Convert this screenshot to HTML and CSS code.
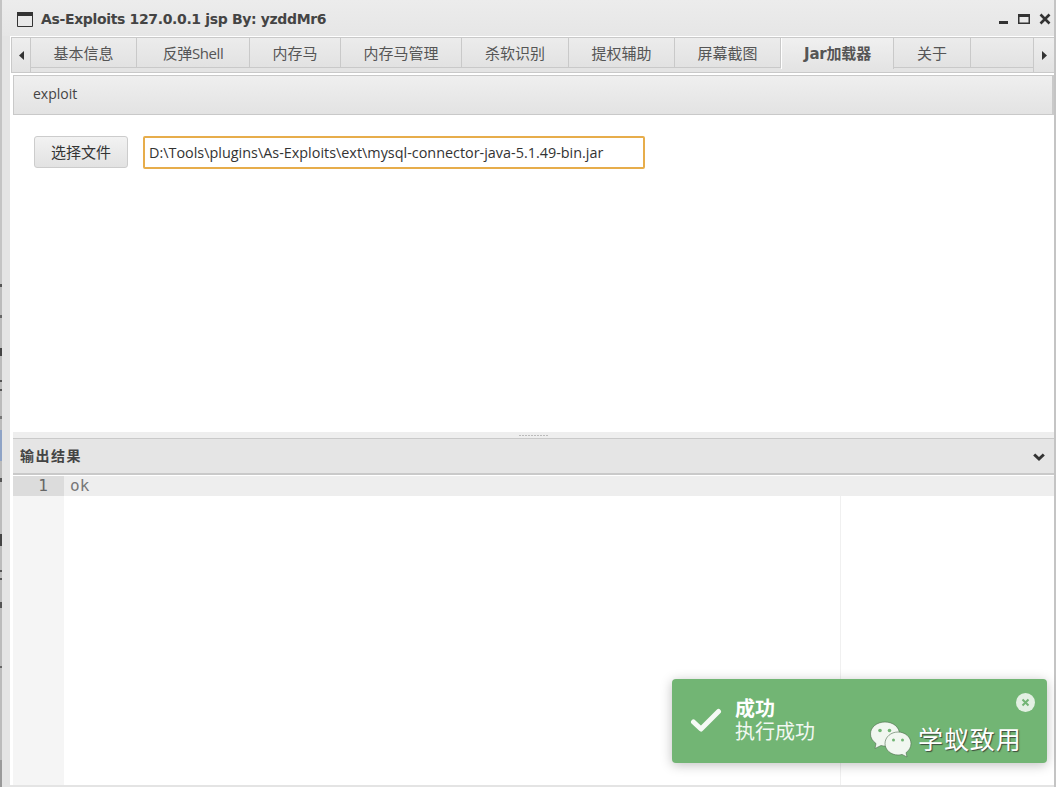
FILE: index.html
```html
<!DOCTYPE html>
<html lang="zh">
<head>
<meta charset="utf-8">
<title>As-Exploits</title>
<link rel="stylesheet" href="styles.css">
</head>
<body>
<div class="backdrop"></div>
<div class="window">
  <header class="titlebar">
    <svg class="win-icon" width="16" height="15" viewBox="0 0 16 15"><path d="M.5.5h15v14H.5z" fill="none" stroke="#333"/><path d="M0 0h16v4H0z" fill="#333"/></svg>
    <span class="title">As-Exploits 127.0.0.1 jsp By: yzddMr6</span>
    <div class="win-controls">
      <svg width="9" height="4" viewBox="0 0 9 4"><path d="M0 0h9v3H0z" fill="#333"/></svg>
      <svg width="12" height="10" viewBox="0 0 12 10"><path d="M.75 1h10.500v8.250H.75z" fill="none" stroke="#333" stroke-width="1.500"/><path d="M0 0h12v3H0z" fill="#333"/></svg>
      <svg width="12" height="12" viewBox="0 0 12 12"><path d="M1.500 1.500l9 9M10.500 1.500l-9 9" stroke="#333" stroke-width="2.600"/></svg>
    </div>
  </header>
  <div class="frame">
    <nav class="tabbar">
      <div class="scroll-btn"><svg width="5" height="9" viewBox="0 0 5 9"><path d="M5 0v9L0 4.500z" fill="#333"/></svg></div>
      <div class="tabs">
        <div class="tab t1">基本信息</div>
        <div class="tab t2">反弹Shell</div>
        <div class="tab t3">内存马</div>
        <div class="tab t4">内存马管理</div>
        <div class="tab t5">杀软识别</div>
        <div class="tab t6">提权辅助</div>
        <div class="tab t7">屏幕截图</div>
        <div class="tab t8 active">Jar加载器</div>
        <div class="tab t9">关于</div>
        <div class="tab-rest"></div>
      </div>
      <div class="scroll-btn right"><svg width="5" height="9" viewBox="0 0 5 9"><path d="M0 0v9l5-4.500z" fill="#333"/></svg></div>
    </nav>
    <section class="upper">
      <div class="panel-head">exploit</div>
      <div class="form-row">
        <button class="btn" type="button">选择文件</button>
        <div class="path-input">D:\Tools\plugins\As-Exploits\ext\mysql-connector-java-5.1.49-bin.jar</div>
      </div>
    </section>
    <div class="splitter"><span class="grip"></span></div>
    <section class="lower">
      <div class="output-head">
        <span>输出结果</span>
        <svg class="chevron" width="12" height="9" viewBox="0 0 12 9"><path d="M1.200 1.500L6 6l4.800-4.500" fill="none" stroke="#333" stroke-width="3"/></svg>
      </div>
      <div class="editor">
        <div class="gutter"><div class="line-no">1</div></div>
        <div class="code">
          <div class="code-line">ok</div>
          <div class="margin-line"></div>
        </div>
      </div>
    </section>
  </div>
</div>
<aside class="toast">
  <svg class="toast-check" width="32" height="26" viewBox="0 0 32 26"><path d="M3.500 15l7.500 7L28.500 4.500" fill="none" stroke="#fff" stroke-width="5" stroke-linecap="round" stroke-linejoin="round" opacity=".93"/></svg>
  <div class="toast-text">
    <div class="toast-title">成功</div>
    <div class="toast-msg">执行成功</div>
  </div>
  <span class="toast-close"><svg width="9" height="9" viewBox="0 0 9 9"><path d="M1.500 1.500l6 6M7.500 1.500l-6 6" stroke="#72b574" stroke-width="2"/></svg></span>
  <div class="watermark">
    <svg width="42" height="38" viewBox="0 0 42 38">
      <path d="M15 1C7 1 .5 6 .5 13c0 4 2.200 7 5.500 9.500L5 27.500l6-3c1.500.4 3 .6 4.500.6C24 25 29.500 19 29.500 13 29.500 6 23 1 15 1z" fill="#f1f7f0" stroke="#4d6b4e" stroke-width=".6"/>
      <path d="M28 11c-7 0-13 5-13 11.500S21 34 28 34c1.300 0 2.700-.2 4-.6l5 2.600-1-4.300c3-2.200 5-5.200 5-9.200C41 16 35 11 28 11z" fill="#f1f7f0" stroke="#4d6b4e" stroke-width=".6"/>
      <circle cx="10" cy="9.500" r="1.800" fill="#72b574"/><circle cx="19.500" cy="9.500" r="1.800" fill="#72b574"/>
      <circle cx="23.500" cy="19" r="1.500" fill="#72b574"/><circle cx="32.500" cy="19" r="1.500" fill="#72b574"/>
    </svg>
    <span class="wm-text">学蚁致用</span>
  </div>
</aside>
</body>
</html>
```
FILE: styles.css
```css
* { box-sizing: border-box; }
html, body { margin: 0; height: 100%; }
body {
  position: relative;
  width: 1056px;
  height: 787px;
  overflow: hidden;
  background: #fff;
  display: flex;
  font-family: "Open Sans", "Noto Sans CJK SC", sans-serif;
  color: #444;
}
.backdrop {
  width: 2px;
  flex: none;
  background: linear-gradient(#c4c4c4 0 284px, #555 284px 287px, #bbb 287px 315px, #666 315px 318px, #bbb 318px 348px,
    #444 348px 356px, #bbb 356px 380px, #555 380px 382px, #bbb 382px 389px, #555 389px 391px, #bbb 391px 416px,
    #777 416px 419px, #bbb 419px 430px, #8ea3c6 430px 461px, #bbb 461px 478px, #555 478px 482px, #bbb 482px 534px,
    #444 534px 546px, #bbb 546px 570px, #555 570px 572px, #bbb 572px 578px, #555 578px 580px, #bbb 580px 602px,
    #555 602px 608px, #bbb 608px 666px, #666 666px 668px, #bbb 668px 760px, #999 760px);
}
.window {
  width: 1054px;
  height: 787px;
  flex: none;
  display: flex;
  flex-direction: column;
  background: #e4e4e4;
  border-right: 2px solid #c4c4c4;
}
.titlebar {
  height: 36px;
  flex: none;
  display: flex;
  align-items: center;
  padding: 2px 3px 0 15px;
  background: linear-gradient(#ececec, #e6e6e6);
}
.win-icon { flex: none; }
.title {
  margin-left: 8px;
  font: bold 14px "DejaVu Sans", "Noto Sans CJK SC", sans-serif;
  letter-spacing: -0.35px;
  color: #444;
  white-space: nowrap;
}
.win-controls {
  margin-left: auto;
  display: flex;
  align-items: center;
  gap: 9px;
}
.win-controls svg:first-child { margin: 8px 1px 0 0; }
.frame {
  flex: 1;
  min-height: 0;
  margin: 0 0 2px 8px;
  border-left: 1px solid #fff;
  border-top: 1px solid #fff;
  display: flex;
  flex-direction: column;
  background: #fff;
}
.tabbar {
  height: 36px;
  flex: none;
  display: flex;
  background: #fff;
  border-left: 1px solid #c9c9c9;
  border-top: 1px solid #c9c9c9;
}
.scroll-btn {
  width: 19px;
  flex: none;
  display: flex;
  align-items: center;
  justify-content: center;
  background: linear-gradient(#eee, #e2e2e2);
  border-right: 1px solid #c9c9c9;
  border-bottom: 1px solid #c9c9c9;
}
.scroll-btn.right {
  width: 21px;
  border-right: 0;
  border-left: 1px solid #c9c9c9;
}
.tabs {
  flex: 1;
  min-width: 0;
  display: flex;
  align-items: flex-start;
  height: 35px;
  background: linear-gradient(#e4e4e4, #e4e4e4) bottom / 100% 4px no-repeat;
  border-bottom: 1px solid #c9c9c9;
}
.tab {
  height: 30px;
  flex: none;
  display: flex;
  align-items: center;
  justify-content: center;
  padding-bottom: 1px;
  font-size: 15px;
  color: #555;
  background: linear-gradient(#ececec, #e2e2e2);
  border-right: 1px solid #c9c9c9;
  border-bottom: 1px solid #c9c9c9;
  white-space: nowrap;
}
.t1 { width: 106px; }
.t2 { width: 113px; letter-spacing: -0.4px; }
.t3 { width: 91px; }
.t4 { width: 121px; }
.t5 { width: 107px; }
.t6 { width: 106px; }
.t7 { width: 106px; }
.t8 { width: 113px; }
.t9 { width: 77px; }
.tab.active {
  height: 31px;
  padding-bottom: 3px;
  font-family: "DejaVu Sans", "Noto Sans CJK SC", sans-serif;
  font-weight: bold;
  letter-spacing: -0.2px;
  background: linear-gradient(#f0f0f0, #e4e4e4);
  border-left: 1px solid #fff;
  border-bottom: 0;
}
.tab-rest {
  flex: 1;
  height: 30px;
  background: linear-gradient(#ececec, #e2e2e2);
  border-bottom: 1px solid #c9c9c9;
}
.upper {
  height: 359px;
  flex: none;
  padding: 2px 0 0 2px;
  display: flex;
  flex-direction: column;
}
.panel-head {
  height: 40px;
  flex: none;
  display: flex;
  align-items: center;
  padding: 0 0 3px 19px;
  font-size: 14px;
  color: #444;
  background: linear-gradient(#efefef, #e3e3e3);
  border: 1px solid #c9c9c9;
  border-right-width: 2px;
}
.form-row {
  display: flex;
  align-items: flex-start;
  padding: 21px 0 0 21px;
  gap: 15px;
}
.btn {
  width: 94px;
  height: 32px;
  padding: 0 0 2px;
  font: 15px "Noto Sans CJK SC", sans-serif;
  color: #333;
  background: linear-gradient(#f2f2f2, #e2e2e2);
  border: 1px solid #ccc;
  border-radius: 3px;
}
.path-input {
  width: 502px;
  height: 33px;
  display: flex;
  align-items: center;
  padding: 0 0 1px 4px;
  font-size: 14.400px;
  color: #333;
  border: 2px solid #e7ad4b;
  border-radius: 2px;
  white-space: nowrap;
}
.splitter {
  height: 6px;
  flex: none;
  margin-left: 2px;
  display: flex;
  align-items: center;
  justify-content: center;
  background: #eee;
}
.grip {
  width: 30px;
  height: 1px;
  background: repeating-linear-gradient(90deg, #bbb 0 2px, transparent 2px 3px);
}
.lower {
  flex: 1;
  min-height: 0;
  margin-left: 2px;
  display: flex;
  flex-direction: column;
}
.output-head {
  height: 37px;
  flex: none;
  display: flex;
  align-items: center;
  justify-content: space-between;
  padding: 0 9px 2px 7px;
  font: bold 14px "Noto Sans CJK SC", sans-serif;
  letter-spacing: 1.500px;
  color: #444;
  background: #e5e5e5;
  border-top: 1px solid #c9c9c9;
  border-bottom: 2px solid #c9c9c9;
}
.chevron { margin-top: 5px; }
.editor {
  flex: 1;
  min-height: 0;
  display: flex;
  margin-top: 1px;
}
.gutter {
  width: 51px;
  flex: none;
  background: #f5f5f5;
}
.line-no {
  height: 20px;
  padding-right: 16px;
  text-align: right;
  font: 16px/20px "DejaVu Sans Mono", monospace;
  color: #666;
  background: #dcdcdc;
}
.code {
  position: relative;
  flex: 1;
  background: #fff;
}
.code-line {
  height: 20px;
  padding-left: 6px;
  font: 16px/20px "DejaVu Sans Mono", monospace;
  color: #777;
  background: #eee;
}
.margin-line {
  position: absolute;
  top: 20px;
  bottom: 0;
  left: 776px;
  width: 1px;
  background: #f0f0f0;
}
.toast {
  position: absolute;
  left: 672px;
  top: 679px;
  width: 375px;
  height: 84px;
  background: #72b574;
  border-radius: 4px;
  box-shadow: 0 2px 12px rgba(0, 0, 0, .25);
  color: #fff;
}
.toast-check {
  position: absolute;
  left: 18px;
  top: 28px;
}
.toast-text {
  position: absolute;
  left: 63px;
  top: 19px;
  font-family: "Liberation Serif", "Noto Sans CJK SC", serif;
  line-height: 23px;
}
.toast-title { font-size: 20px; font-weight: bold; }
.toast-msg { font-size: 20px; opacity: .9; }
.toast-close {
  position: absolute;
  right: 12px;
  top: 14px;
  width: 19px;
  height: 19px;
  border-radius: 50%;
  background: rgba(255, 255, 255, .8);
  display: flex;
  align-items: center;
  justify-content: center;
}
.watermark {
  position: absolute;
  left: 198px;
  top: 41px;
  display: flex;
  align-items: center;
  gap: 6px;
}
.wm-text {
  padding-bottom: 3px;
  font: 25px "Noto Sans CJK SC", sans-serif;
  letter-spacing: .9px;
  color: #fff;
  text-shadow: 1px 1px 1px #3c4a3c;
}
```
